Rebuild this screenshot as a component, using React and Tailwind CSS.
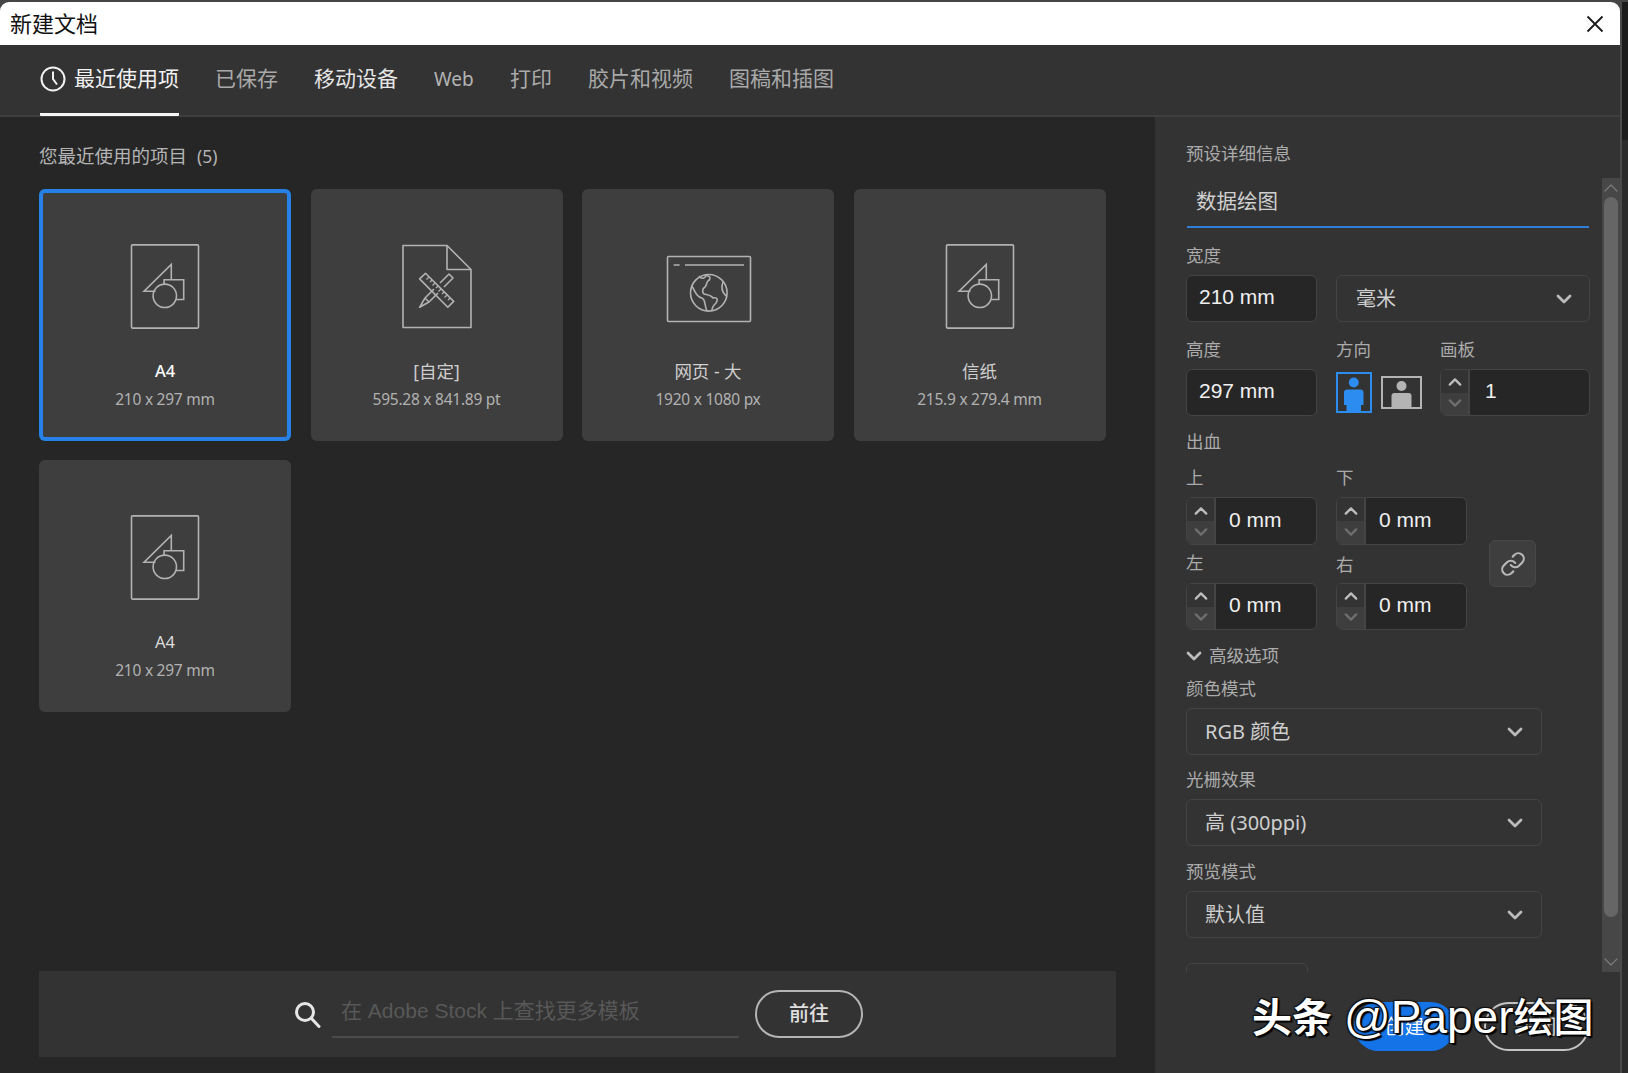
import React from "react";
import { Link } from "lucide-react";

const Chevron = ({ up = false, className = "", stroke = "#b4b4b4", w = 2.6 }) => (
  <svg width="16" height="10" viewBox="0 0 16 10" fill="none" className={className}>
    <polyline points={up ? "2,8 8,2 14,8" : "2,2 8,8 14,2"} stroke={stroke} strokeWidth={w} strokeLinecap="round" strokeLinejoin="round" />
  </svg>
);

const Shapes = () => (
  <svg width="70" height="85" viewBox="0 0 70 85" fill="none" stroke="#b2b2b2" strokeWidth="1.6">
    <rect x="1.5" y="0.9" width="67" height="83.2" rx="1" />
    <g transform="translate(1.5 1)">
      <path d="M24 46.2H12.6L39.8 19.5V34.8" />
      <path d="M32.6 39.5V34.8H52.2V54.5H44.6" />
      <circle cx="33.3" cy="50.8" r="11.7" />
    </g>
  </svg>
);

const CustomDoc = () => (
  <svg width="70" height="85" viewBox="0 0 70 85" fill="none" stroke="#b2b2b2" strokeWidth="1.6" strokeLinejoin="round">
    <g transform="translate(0 0.5)">
      <path d="M1 1H45L69 25V83H1Z" />
      <path d="M45 1V25H69" />
      <path d="M23.5 28.8L17.6 34.4L45.8 62.8L51.7 56.9Z" />
      <path d="M27 32.5L24.5 35M30 35.5L28 37.5M33 38.5L30.5 41M36 41.5L34 43.5M39 44.5L36.5 47M42 47.5L40 49.5M45 50.5L42.5 53M48 53.5L46 55.5" strokeWidth="1.2" />
      <path d="M38 38.5L47 29.5L51 33.5L42 42.5" />
      <path d="M32 44.5L23 53.5L17.6 62.8L27 57.5L36 48.5M23 53.5L27 57.5" />
    </g>
  </svg>
);

const WebIcon = () => (
  <svg width="86" height="85" viewBox="0 0 86 85" fill="none" stroke="#b2b2b2" strokeWidth="1.6" strokeLinejoin="round" className="ml-[2px]">
    <g transform="translate(0 1)">
      <rect x="1.5" y="11.5" width="83" height="65" rx="1" />
      <path d="M7.7 20H13.6M19 20H78" />
      <circle cx="42.8" cy="47.8" r="18.3" />
      <path d="M33 31C36 35 39 33 40 30.5C45 31 45 34 42 36C40 38 41 40 39 42C36 44 36 47 38 49C42 50 45 50 47 53C52 52 52 55 50 58C47 61 46 63 46 65" />
      <path d="M26 41C29 47 31 52 36 53C40 55 38 60 41 66" />
      <path d="M57 37C55 42 55 46 60 51" />
    </g>
  </svg>
);

const Card = ({ icon, title, sub, selected, titleClass = "text-[#cfcfcf] text-[17.5px]" }) => (
  <div className={`relative h-[252px] w-[252px] rounded-[6px] bg-[#3e3e3e] flex flex-col items-center pt-[55px] ${selected ? "ring-[4px] ring-inset ring-[#2680e6]" : ""}`}>
    <div className="h-[85px] flex items-start justify-center">{icon}</div>
    <div className={`mt-[30px] leading-[24px] ${titleClass}`}>{title}</div>
    <div className="mt-[4px] text-[15.5px] tracking-[-0.25px] leading-[24px] text-[#b2b2b2]">{sub}</div>
  </div>
);

const Label = ({ children, className = "" }) => (
  <div className={`h-[24px] text-[17.5px] leading-[22px] text-[#ababab] ${className}`}>{children}</div>
);

const TextBox = ({ children, className = "w-[131px] h-[47px]" }) => (
  <div className={`${className} rounded-[6px] border-[1.5px] border-[#444444] bg-[#262626] flex items-center pl-[12px] pb-[3px] font-['Liberation_Sans',sans-serif] text-[21px] text-[#f0f0f0]`}>
    {children}
  </div>
);

const Stepper = ({ children, h = "h-[47px]", w = "w-[131px]", tx = "pl-[13px]" }) => (
  <div className={`${w} ${h} rounded-[6px] border-[1.5px] border-[#444444] bg-[#262626] flex overflow-hidden`}>
    <div className="w-[29px] flex flex-col border-r-[2px] border-[#444444] bg-[#333333]">
      <div className="flex-1 flex items-center justify-center pt-[2px]"><Chevron up stroke="#bdbdbd" className="w-[14px]" /></div>
      <div className="flex-1 flex items-center justify-center bg-[#3e3e3e] pb-[2px]"><Chevron stroke="#6e6e6e" className="w-[14px]" /></div>
    </div>
    <div className={`flex-1 flex items-center ${tx} pb-[3px] font-['Liberation_Sans',sans-serif] text-[21px] text-[#f0f0f0]`}>{children}</div>
  </div>
);

const Select = ({ children, className = "w-[356px]", pl = "pl-[18px]", pr = "pr-[18px]" }) => (
  <div className={`${className} h-[47px] rounded-[6px] border-[1.5px] border-[#444444] flex items-center justify-between ${pl} ${pr} text-[20px] text-[#cfcfcf]`}>
    <span>{children}</span>
    <Chevron stroke="#bbbbbb" w={2.8} />
  </div>
);

const Tab = ({ children, color = "text-[#a9a9a9]", size = "text-[21px]" }) => (
  <div className={`h-full flex items-center pb-[2px] ${size} ${color}`}>{children}</div>
);

export default function App() {
  return (
    <div className="relative w-[1628px] h-[1073px] overflow-hidden bg-[#454545] pt-[2px] flex font-['Noto_Sans','Noto_Sans_CJK_SC',sans-serif]">
      <div className="w-[1620px] h-full flex flex-col">
        {/* title bar */}
        <div className="h-[43px] rounded-t-[9px] bg-white flex items-center justify-between pl-[10px] pr-[16px] text-[22px] text-[#111111]">
          <span className="pb-[1px]">新建文档</span>
          <svg width="18" height="18" viewBox="0 0 18 18" stroke="#1a1a1a" strokeWidth="1.8" fill="none">
            <path d="M1.5 1.5L16.5 16.5M16.5 1.5L1.5 16.5" />
          </svg>
        </div>

        {/* tabs */}
        <div className="h-[72px] bg-[#333333] border-b-[2px] border-[#3e3e3e] flex items-center gap-[36px] pl-[40px]">
          <div className="h-[71px] -mb-[1px] border-b-[3px] border-[#f5f5f5] flex items-center gap-[8px] rounded-b-[1px] text-[21px] text-[#f2f2f2]">
            <svg width="26" height="26" viewBox="0 0 26 26" fill="none" stroke="#f2f2f2" strokeWidth="2">
              <circle cx="13" cy="13" r="11.5" />
              <path d="M13 5.5V13L17 18.5" />
            </svg>
            <span>最近使用项</span>
          </div>
          <Tab>已保存</Tab>
          <Tab color="text-[#e6e6e6]">移动设备</Tab>
          <Tab color="text-[#b4b4b4]" size="text-[19px] w-[40px]">Web</Tab>
          <Tab>打印</Tab>
          <Tab>胶片和视频</Tab>
          <Tab>图稿和插图</Tab>
        </div>

        {/* body */}
        <div className="flex-1 flex min-h-0">
          {/* left */}
          <div className="w-[1155px] bg-[#262626] pl-[39px] pt-[27px] pb-[16px] flex flex-col">
            <div className="text-[18.5px] leading-[24px] text-[#b4b4b4]">您最近使用的项目<span className="ml-[10px] text-[17.5px]">(5)</span></div>
            <div className="mt-[21px] grid grid-cols-[repeat(4,252px)] gap-x-[19.5px] gap-y-[19px]">
              <Card selected icon={<Shapes />} title="A4" titleClass="text-white font-medium text-[16.5px]" sub="210 x 297 mm" />
              <Card icon={<CustomDoc />} title="[自定]" sub="595.28 x 841.89 pt" />
              <Card icon={<WebIcon />} title="网页 - 大" sub="1920 x 1080 px" />
              <Card icon={<Shapes />} title="信纸" sub="215.9 x 279.4 mm" />
              <Card icon={<Shapes />} title="A4" titleClass="text-[#dddddd] text-[16.5px]" sub="210 x 297 mm" />
            </div>
            <div className="mt-auto w-[1077px] h-[86px] bg-[#333333] flex items-center pl-[255px]">
              <svg width="27" height="27" viewBox="0 0 27 27" fill="none" stroke="#e6e6e6" strokeWidth="3" strokeLinecap="round">
                <circle cx="11" cy="11" r="8.5" />
                <path d="M17.5 17.5L25 25.5" />
              </svg>
              <div className="ml-[11px] w-[407px] h-[48px] border-b-[2px] border-[#4b4b4b] pl-[9px] pb-[4px] flex items-center font-['Liberation_Sans','Noto_Sans_CJK_SC',sans-serif] text-[21px] text-[#585858]">
                在 Adobe Stock 上查找更多模板
              </div>
              <div className="ml-[16px] w-[108px] h-[48px] rounded-full border-[2.5px] border-[#b4b4b4] flex items-center justify-center text-[20px] font-medium text-[#e0e0e0]">
                前往
              </div>
            </div>
          </div>

          {/* right */}
          <div className="w-[465px] bg-[#333333] flex flex-col">
            <div className="h-[61px] pl-[31px] pt-[25px] shrink-0">
              <Label>预设详细信息</Label>
            </div>
            <div className="h-[794px] flex shrink-0">
              <div className="w-[447px] pl-[31px] overflow-hidden">
                <div className="ml-[1px] w-[402px] h-[50px] border-b-[2px] border-[#2f7fd6] flex items-center pl-[9px] pb-[2px] text-[20.5px] text-[#d0d0d0]">数据绘图</div>
                <Label className="mt-[16px]">宽度</Label>
                <div className="mt-[7px] flex gap-[19px]">
                  <TextBox>210 mm</TextBox>
                  <Select className="w-[254px]" pl="pl-[19px]" pr="pr-[17px]">毫米</Select>
                </div>
                <div className="mt-[16px] flex">
                  <Label className="w-[150px]">高度</Label>
                  <Label className="w-[104px]">方向</Label>
                  <Label>画板</Label>
                </div>
                <div className="mt-[7px] flex">
                  <TextBox>297 mm</TextBox>
                  <div className="ml-[19px] w-[104px] flex gap-[9px] items-center">
                    <svg width="36" height="41" viewBox="0 0 36 41" fill="none">
                      <rect x="1" y="1" width="34" height="39" stroke="#2d8cf0" strokeWidth="2" />
                      <circle cx="17.8" cy="10.5" r="5" fill="#2d8cf0" />
                      <path d="M8 21a3 3 0 0 1 3-3.5H24.5a3 3 0 0 1 3 3.5V33H25V39H10.5V33H8Z" fill="#2d8cf0" />
                    </svg>
                    <svg width="41" height="33" viewBox="0 0 41 33" fill="none">
                      <rect x="1" y="1" width="39" height="31" stroke="#b4b4b4" strokeWidth="2" />
                      <circle cx="20.5" cy="10" r="5" fill="#b4b4b4" />
                      <path d="M10.5 20a3 3 0 0 1 3-3H27.5a3 3 0 0 1 3 3V31H10.5Z" fill="#b4b4b4" />
                    </svg>
                  </div>
                  <Stepper w="w-[150px]" tx="pl-[15px]">1</Stepper>
                </div>
                <Label className="mt-[14px]">出血</Label>
                <div className="mt-[12px] flex">
                  <div className="w-[281px] grid grid-cols-[131px_131px] gap-x-[19px]">
                    <Label>上</Label>
                    <Label>下</Label>
                    <div className="mt-[7px]"><Stepper h="h-[48px]">0 mm</Stepper></div>
                    <div className="mt-[7px]"><Stepper h="h-[48px]">0 mm</Stepper></div>
                    <Label className="mt-[6px]">左</Label>
                    <Label className="mt-[8px]">右</Label>
                    <div className="mt-[6px]"><Stepper>0 mm</Stepper></div>
                    <div className="mt-[6px]"><Stepper>0 mm</Stepper></div>
                  </div>
                  <div className="ml-[22px] mt-[74px] w-[47px] h-[47px] rounded-[6px] bg-[#3e3e3e] border-[1.5px] border-[#484848] flex items-center justify-center">
                    <Link size={26} color="#b8b8b8" strokeWidth={2} />
                  </div>
                </div>
                <div className="mt-[14px] flex items-center gap-[7px]">
                  <Chevron stroke="#bdbdbd" w={2.8} />
                  <Label>高级选项</Label>
                </div>
                <Label className="mt-[9px]">颜色模式</Label>
                <div className="mt-[7px]"><Select>RGB 颜色</Select></div>
                <Label className="mt-[13px]">光栅效果</Label>
                <div className="mt-[7px]"><Select>高 (300ppi)</Select></div>
                <Label className="mt-[14px]">预览模式</Label>
                <div className="mt-[7px]"><Select>默认值</Select></div>
                <div className="mt-[25px] w-[122px] h-[47px] rounded-[6px] border-[1.5px] border-[#444444]" />
              </div>
              <div className="w-[18px] bg-[#474747] flex flex-col items-center">
                <div className="h-[19px] flex items-center"><Chevron up stroke="#7a7a7a" w={1.2} /></div>
                <div className="w-[14px] h-[720px] rounded-full bg-[#666666]" />
                <div className="flex-1 flex items-end justify-center pb-[5px]"><Chevron stroke="#7a7a7a" w={1.2} /></div>
              </div>
            </div>
            <div className="flex-1 flex justify-end items-start gap-[29px] pt-[30px] pr-[31px]">
              <div className="w-[101px] h-[49px] rounded-full bg-[#1473e6] flex items-center justify-center text-[20px] text-white">创建</div>
              <div className="w-[105px] h-[49px] rounded-full border-[2.5px] border-[#c4c4c4] flex items-center justify-center text-[20px] text-[#e0e0e0]">关闭</div>
            </div>
          </div>
        </div>
      </div>

      {/* right edge of the window behind */}
      <div className="w-[8px] h-full border-l-[2px] border-[#4a4a4a] flex flex-col">
        <div className="h-[138px] bg-[#1c1c1c]" />
        <div className="flex-1 bg-[#2b2b2b]" />
      </div>

      {/* watermark */}
      <div className="absolute left-[1252px] top-[991px] flex items-center whitespace-nowrap text-white leading-[52px] [text-shadow:2px_2px_1px_#000,-1px_-1px_1px_#111,1px_-1px_1px_#111,-1px_1px_1px_#111]">
        <span className="text-[40px] font-bold">头条</span>
        <span className="ml-[12px] text-[46px] font-['Liberation_Sans',sans-serif]">@Paper</span>
        <span className="text-[40px] font-medium">绘图</span>
      </div>
    </div>
  );
}
